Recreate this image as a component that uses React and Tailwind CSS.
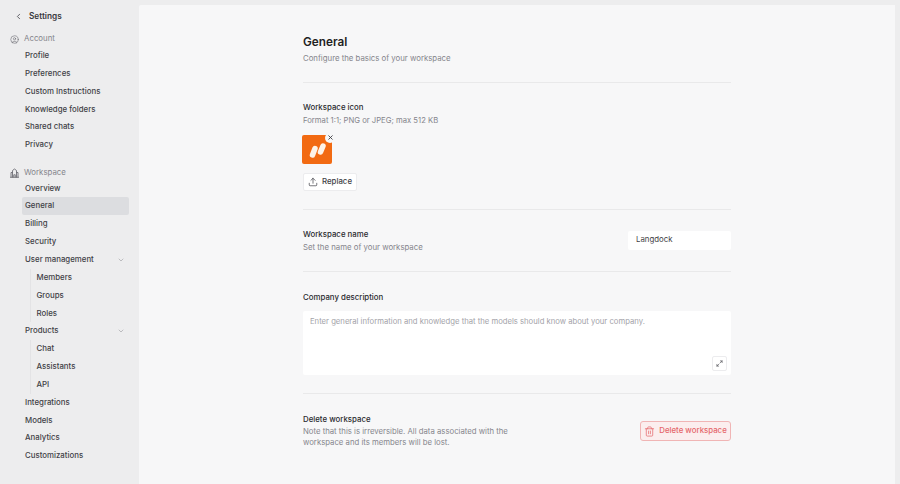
import { ChevronLeft, ChevronDown, Maximize2, Trash2, Upload, X, CircleUser } from "lucide-react";

function Item({ children, active, chevron }) {
  return (
    <div className={`h-[17.85px] flex items-center justify-between pl-[3px] pr-[4px] rounded-[2px] text-[7.85px] font-medium text-[#3f3f46] ${active ? "bg-[#dcdde0]" : ""}`}>
      <span>{children}</span>
      {chevron && <ChevronDown size={8} strokeWidth={1.5} className="text-[#8a8a90]" />}
    </div>
  );
}

function SubGroup({ items }) {
  return (
    <div className="ml-[8px] border-l border-[#e3e3e5] pl-[2.5px]">
      {items.map((t) => <Item key={t}>{t}</Item>)}
    </div>
  );
}

function GroupLabel({ icon, children, className = "" }) {
  return (
    <div className={`flex items-center gap-[5px] pl-[10px] h-[14px] text-[7.85px] text-[#85858c] ${className}`}>
      {icon}
      <span>{children}</span>
    </div>
  );
}

function HouseIcon() {
  return (
    <svg width="9" height="10" viewBox="0 0 18 20" fill="none" stroke="currentColor" strokeWidth="1.800" strokeLinejoin="round" strokeLinecap="round">
      <path d="M1 18.500h16" />
      <path d="M2 18.500V9h3M16 18.500V9h-3" />
      <path d="M5 18.500V5l4-3 4 3v13.500" />
      <path d="M7.500 18.500v-5h3v5" />
    </svg>
  );
}

export default function App() {
  return (
    <div className="flex h-[484px] w-[900px] overflow-hidden bg-[#ededee] font-['Inter',sans-serif]">
      <aside className="w-[139px] shrink-0 flex flex-col">
        <div className="flex items-center gap-[6px] pl-[14px] h-[16px] mt-[8.500px] text-[8.25px] font-semibold text-[#3a3a40]">
          <ChevronLeft size={9} strokeWidth={2} />
          <span>Settings</span>
        </div>
        <GroupLabel className="mt-[7.500px]" icon={<CircleUser size={9} strokeWidth={1.6} className="text-[#6f6f76]" />}>Account</GroupLabel>
        <div className="pl-[22px] pr-[10px] mt-[1px]">
          {["Profile", "Preferences", "Custom Instructions", "Knowledge folders", "Shared chats", "Privacy"].map((t) => <Item key={t}>{t}</Item>)}
        </div>
        <GroupLabel className="mt-[11.500px]" icon={<span className="text-[#6f6f76]"><HouseIcon /></span>}>Workspace</GroupLabel>
        <div className="pl-[22px] pr-[10px]">
          <Item>Overview</Item>
          <Item active>General</Item>
          <Item>Billing</Item>
          <Item>Security</Item>
          <Item chevron>User management</Item>
          <SubGroup items={["Members", "Groups", "Roles"]} />
          <Item chevron>Products</Item>
          <SubGroup items={["Chat", "Assistants", "API"]} />
          <Item>Integrations</Item>
          <Item>Models</Item>
          <Item>Analytics</Item>
          <Item>Customizations</Item>
        </div>
      </aside>
      <main className="mt-[5px] mr-[5px] flex-1 bg-[#f7f7f8] rounded-tl-[2px] flex justify-center">
        <div className="w-[428px] pt-[29px]">
          <h1 className="text-[11.750px] leading-[16px] font-semibold text-[#1f1f23]">General</h1>
          <p className="mt-[2px] text-[7.8px] leading-[12px] text-[#85858c]">Configure the basics of your workspace</p>
          <div className="mt-[18px] border-t border-[#e9e9ea]" />

          <div className="mt-[17.500px] text-[7.85px] leading-[12px] font-medium text-[#2a2a2f]">Workspace icon</div>
          <p className="mt-[2px] text-[7.7px] leading-[12px] text-[#85858c]">Format 1:1; PNG or JPEG; max 512 KB</p>
          <div className="relative mt-[8px] -ml-[1px] w-[30px] h-[29px] rounded-[2px] bg-[#f26a12]">
            <svg width="30" height="29" viewBox="0 0 30 29" fill="none" stroke="#fff" strokeWidth="5.500" strokeLinecap="round" className="block">
              <path d="M13 13.500 10.500 20" stroke="#fdf3e8" />
              <path d="M21 11 18.500 17" stroke="#fdf3e8" />
            </svg>
            <div className="absolute -top-[2px] -right-[3px] w-[10px] h-[10px] rounded-full bg-[#f7f7f8] flex items-center justify-center text-[#3a3a40]">
              <X size={7} strokeWidth={3} />
            </div>
          </div>
          <button className="mt-[9px] h-[18px] w-[54px] flex items-center justify-center gap-[4px] bg-white border border-[#ececee] rounded-[2px] text-[7.85px] font-medium text-[#3f3f46]">
            <Upload size={10} strokeWidth={1.7} />
            Replace
          </button>
          <div className="mt-[18px] border-t border-[#e9e9ea]" />

          <div className="mt-[18px] flex items-center justify-between">
            <div>
              <div className="text-[7.85px] leading-[12px] font-medium text-[#2a2a2f]">Workspace name</div>
              <p className="mt-[1px] text-[7.8px] leading-[12px] text-[#85858c]">Set the name of your workspace</p>
            </div>
            <div className="w-[103px] h-[19px] bg-white rounded-[2px] pl-[8px] flex items-center text-[7.85px] text-[#3f3f46]">Langdock</div>
          </div>
          <div className="mt-[18px] border-t border-[#e9e9ea]" />

          <div className="mt-[19px] text-[7.85px] leading-[12px] font-medium text-[#2a2a2f]">Company description</div>
          <div className="relative mt-[8px] h-[64px] bg-white rounded-[2px] px-[7px] pt-[5px] text-[7.7px] leading-[12px] text-[#a3a3a9]">
            Enter general information and knowledge that the models should know about your company.
            <div className="absolute right-[4px] bottom-[4px] w-[15px] h-[15px] border border-[#ececee] rounded-[2px] bg-white flex items-center justify-center text-[#3f3f46]">
              <Maximize2 size={7} strokeWidth={2} />
            </div>
          </div>
          <div className="mt-[18.500px] border-t border-[#e9e9ea]" />

          <div className="mt-[18.500px] flex items-center justify-between">
            <div>
              <div className="text-[7.85px] leading-[12px] font-medium text-[#2a2a2f]">Delete workspace</div>
              <p className="mt-[1px] w-[215px] text-[7.75px] leading-[11px] text-[#85858c]">Note that this is irreversible. All data associated with the workspace and its members will be lost.</p>
            </div>
            <button className="mt-[2px] w-[91px] h-[20px] flex items-center justify-center gap-[4px] bg-[#fbeeee] border border-[#f0b5b5] rounded-[3px] text-[7.85px] font-medium text-[#e5676b] whitespace-nowrap">
              <Trash2 size={11} strokeWidth={1.6} />
              Delete workspace
            </button>
          </div>
        </div>
      </main>
    </div>
  );
}
